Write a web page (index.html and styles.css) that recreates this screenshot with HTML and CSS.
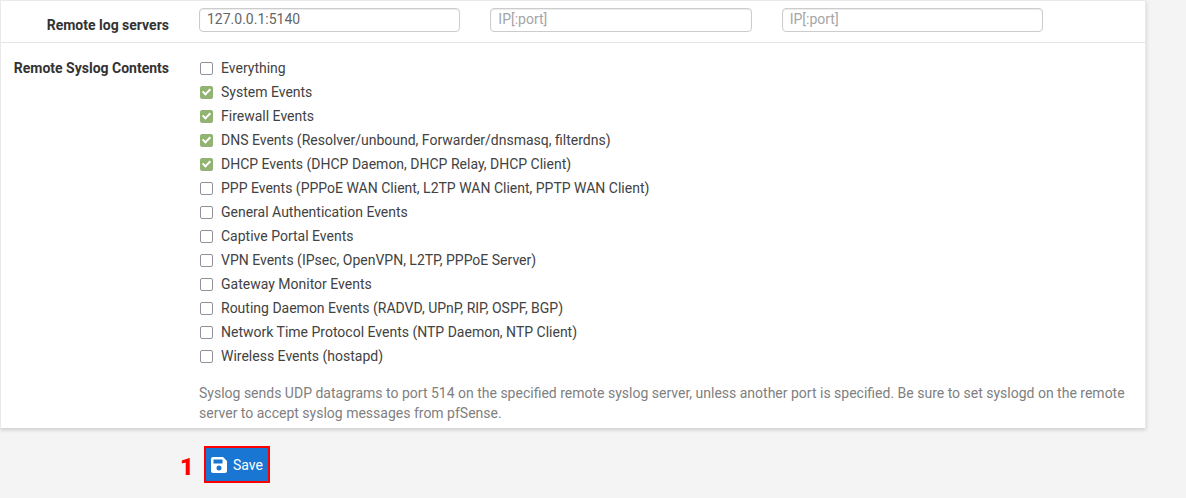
FILE: index.html
```html
<!DOCTYPE html>
<html lang="en">
<head>
    <meta charset="utf-8">
    <title>Remote Logging Options</title>
    <link rel="stylesheet" href="styles.css">
</head>
<body>
    <form class="settings">
        <div class="panel">
            <div class="form-group servers">
                <label class="control-label" for="server1">Remote log servers</label>
                <div class="server-inputs">
                    <input class="form-control" type="text" id="server1" value="127.0.0.1:5140" placeholder="IP[:port]">
                    <input class="form-control" type="text" id="server2" aria-label="Remote log server 2" placeholder="IP[:port]">
                    <input class="form-control" type="text" id="server3" aria-label="Remote log server 3" placeholder="IP[:port]">
                </div>
            </div>

            <div class="form-group contents" role="group" aria-labelledby="contentsLabel">
                <div class="control-label" id="contentsLabel">Remote Syslog Contents</div>
                <div class="options">
                    <label class="chkbox"><input type="checkbox" name="logall">Everything</label>
                    <label class="chkbox"><input type="checkbox" name="system" checked>System Events</label>
                    <label class="chkbox"><input type="checkbox" name="filter" checked>Firewall Events</label>
                    <label class="chkbox"><input type="checkbox" name="resolver" checked>DNS Events (Resolver/unbound, Forwarder/dnsmasq, filterdns)</label>
                    <label class="chkbox"><input type="checkbox" name="dhcp" checked>DHCP Events (DHCP Daemon, DHCP Relay, DHCP Client)</label>
                    <label class="chkbox"><input type="checkbox" name="ppp">PPP Events (PPPoE WAN Client, L2TP WAN Client, PPTP WAN Client)</label>
                    <label class="chkbox"><input type="checkbox" name="auth">General Authentication Events</label>
                    <label class="chkbox"><input type="checkbox" name="portalauth">Captive Portal Events</label>
                    <label class="chkbox"><input type="checkbox" name="vpn">VPN Events (IPsec, OpenVPN, L2TP, PPPoE Server)</label>
                    <label class="chkbox"><input type="checkbox" name="dpinger">Gateway Monitor Events</label>
                    <label class="chkbox"><input type="checkbox" name="routing">Routing Daemon Events (RADVD, UPnP, RIP, OSPF, BGP)</label>
                    <label class="chkbox"><input type="checkbox" name="ntpd">Network Time Protocol Events (NTP Daemon, NTP Client)</label>
                    <label class="chkbox"><input type="checkbox" name="hostapd">Wireless Events (hostapd)</label>
                    <p class="help-block">Syslog sends UDP datagrams to port 514 on the specified remote syslog server, unless another port is specified. Be sure to set syslogd on the remote server to accept syslog messages from pfSense.</p>
                </div>
            </div>
        </div>

        <div class="actions">
            <span class="step">1</span>
            <button class="btn-save" type="submit">
                <svg width="16" height="16" viewBox="0 0 16 16" aria-hidden="true">
                    <path fill="#fff" fill-rule="evenodd" d="M2 0h10l4 4v10a2 2 0 0 1-2 2H2a2 2 0 0 1-2-2V2a2 2 0 0 1 2-2zM2.500 2.500v4h9v-4zM8 8.500a2.500 2.500 0 1 0 0 5a2.500 2.500 0 1 0 0-5z"/>
                </svg>
                Save
            </button>
        </div>
    </form>
</body>
</html>
```

FILE: styles.css
```css
* {
    box-sizing: border-box;
}
body {
    margin: 0;
    background-color: #f4f4f4;
    color: #424242;
    font-family: Roboto, "Liberation Sans", sans-serif;
    font-size: 14px;
    line-height: 20px;
}
.panel {
    margin-right: 40px;
    background-color: white;
    border: 1px solid #eaeaea;
    border-bottom: none;
    box-shadow: 0 2px 4px rgba(0,0,0,0.16);
}
.form-group {
    display: grid;
    grid-template-columns: 168px 1fr;
    column-gap: 30px;
}
.servers {
    padding: 7px 102px 7px 0;
    border-bottom: 1px solid #e4e4e4;
}
.contents {
    padding: 13px 12px 5px 0;
}
.control-label {
    font-weight: bold;
    text-align: right;
    color: #333;
}
.servers .control-label {
    padding-top: 7px;
}
.contents .control-label {
    padding-top: 2px;
}
.server-inputs {
    display: grid;
    grid-template-columns: repeat(3, 1fr);
    gap: 30px;
}
.form-control {
    width: 100%;
    height: 24px;
    padding: 0 7px 2px;
    border: 1px solid #ccc;
    border-radius: 4px;
    box-shadow: inset 0 1px 1px rgba(0,0,0,0.08);
    background-color: white;
    color: #666;
    font-family: inherit;
    font-size: 14px;
}
.form-control::placeholder {
    color: #a5a5a5;
    opacity: 1;
}
.chkbox {
    display: flex;
    align-items: center;
    height: 24px;
}
.chkbox input {
    appearance: none;
    position: relative;
    width: 13px;
    height: 13px;
    margin: 0 8px 0 1px;
    border: 1px solid #92929e;
    border-radius: 2px;
    background-color: white;
}
.chkbox input:checked {
    border-color: #92b372;
    background-color: #92b372;
}
.chkbox input:checked::after {
    content: "";
    position: absolute;
    left: 3px;
    top: 0;
    width: 3px;
    height: 6px;
    border: solid white;
    border-width: 0 2px 2px 0;
    transform: rotate(45deg);
}
.help-block {
    margin: 15px 0 0;
    color: #808080;
}
.actions {
    display: flex;
    align-items: center;
    padding: 18px 0 14px 180px;
}
.step {
    width: 24px;
    padding-top: 5px;
    color: #f00;
    font-size: 24px;
    font-weight: 900;
}
.btn-save {
    display: flex;
    align-items: center;
    gap: 6px;
    height: 37px;
    padding: 0 5px;
    border: 2px solid #f00;
    background-color: #1976d2;
    color: white;
    font-family: inherit;
    font-size: 14px;
    cursor: pointer;
}
```
